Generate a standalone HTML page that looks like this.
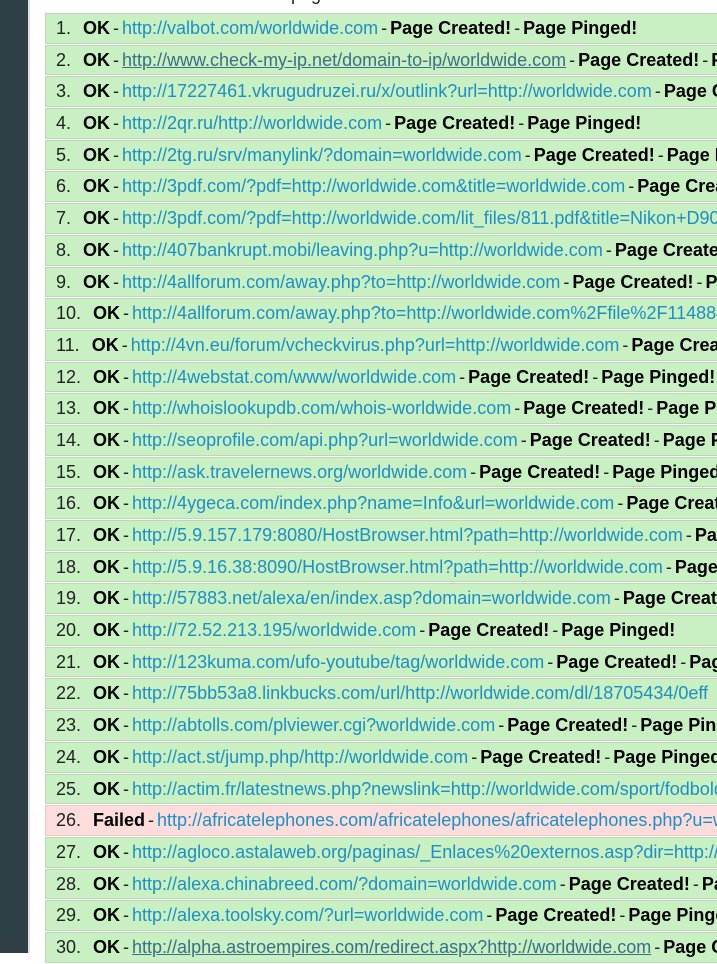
<!DOCTYPE html>
<html><head><meta charset="utf-8"><style>
html,body{margin:0;padding:0;width:717px;height:953px;overflow:hidden;background:#fff;font-family:"Liberation Sans",Arial,sans-serif;}
.side{position:absolute;left:0;top:0;width:28px;height:953px;background:#2f3f46;}
.strip{position:absolute;left:28px;top:0;width:2px;height:953px;background:#dde3e4;}
.list{position:absolute;left:45px;top:13px;width:672px;overflow:hidden;}
.r{height:28.7px;line-height:29px;border:1px solid #bcd8b4;border-right:none;background:#c8f0c2;margin-bottom:1px;white-space:nowrap;font-size:18px;color:#222;box-sizing:content-box;overflow:hidden;word-spacing:-2px;}
.r.f{background:#fddcdc;border-color:#e8c8c8;}
.n{display:inline-block;padding-left:10px;margin-right:12px;word-spacing:0;}
b{color:#000;word-spacing:0;}
a{color:#1e8fc2;text-decoration:none;}
a.u{color:#3a6f86;text-decoration:underline;}
.h{position:absolute;left:200px;top:-16px;font-size:18px;color:#222;white-space:nowrap;}
</style></head><body>
<div class="side"></div><div class="strip"></div>
<div class="h">Results for page:</div>
<div class="list">
<div class="r"><span class="n">1.</span><b>OK</b> - <a>http://valbot.com/worldwide.com</a> - <b>Page Created!</b> - <b>Page Pinged!</b></div>
<div class="r"><span class="n">2.</span><b>OK</b> - <a class="u">http://www.check-my-ip.net/domain-to-ip/worldwide.com</a> - <b>Page Created!</b> - <b>Page Pinged!</b></div>
<div class="r"><span class="n">3.</span><b>OK</b> - <a>http://17227461.vkrugudruzei.ru/x/outlink?url=http://worldwide.com</a> - <b>Page Created!</b></div>
<div class="r"><span class="n">4.</span><b>OK</b> - <a>http://2qr.ru/http://worldwide.com</a> - <b>Page Created!</b> - <b>Page Pinged!</b></div>
<div class="r"><span class="n">5.</span><b>OK</b> - <a>http://2tg.ru/srv/manylink/?domain=worldwide.com</a> - <b>Page Created!</b> - <b>Page Pinged!</b></div>
<div class="r"><span class="n">6.</span><b>OK</b> - <a>http://3pdf.com/?pdf=http://worldwide.com&amp;title=worldwide.com</a> - <b>Page Created!</b></div>
<div class="r"><span class="n">7.</span><b>OK</b> - <a>http://3pdf.com/?pdf=http://worldwide.com/lit_files/811.pdf&amp;title=Nikon+D90</a></div>
<div class="r"><span class="n">8.</span><b>OK</b> - <a>http://407bankrupt.mobi/leaving.php?u=http://worldwide.com</a> - <b>Page Created!</b></div>
<div class="r"><span class="n">9.</span><b>OK</b> - <a>http://4allforum.com/away.php?to=http://worldwide.com</a> - <b>Page Created!</b> - <b>Page Pinged!</b></div>
<div class="r"><span class="n">10.</span><b>OK</b> - <a>http://4allforum.com/away.php?to=http://worldwide.com%2Ffile%2F114884</a></div>
<div class="r"><span class="n">11.</span><b>OK</b> - <a>http://4vn.eu/forum/vcheckvirus.php?url=http://worldwide.com</a> - <b>Page Created!</b></div>
<div class="r"><span class="n">12.</span><b>OK</b> - <a>http://4webstat.com/www/worldwide.com</a> - <b>Page Created!</b> - <b>Page Pinged!</b></div>
<div class="r"><span class="n">13.</span><b>OK</b> - <a>http://whoislookupdb.com/whois-worldwide.com</a> - <b>Page Created!</b> - <b>Page Pinged!</b></div>
<div class="r"><span class="n">14.</span><b>OK</b> - <a>http://seoprofile.com/api.php?url=worldwide.com</a> - <b>Page Created!</b> - <b>Page Pinged!</b></div>
<div class="r"><span class="n">15.</span><b>OK</b> - <a>http://ask.travelernews.org/worldwide.com</a> - <b>Page Created!</b> - <b>Page Pinged!</b></div>
<div class="r"><span class="n">16.</span><b>OK</b> - <a>http://4ygeca.com/index.php?name=Info&amp;url=worldwide.com</a> - <b>Page Created!</b></div>
<div class="r"><span class="n">17.</span><b>OK</b> - <a>http://5.9.157.179:8080/HostBrowser.html?path=http://worldwide.com</a> - <b>Page Created!</b></div>
<div class="r"><span class="n">18.</span><b>OK</b> - <a>http://5.9.16.38:8090/HostBrowser.html?path=http://worldwide.com</a> - <b>Page Created!</b></div>
<div class="r"><span class="n">19.</span><b>OK</b> - <a>http://57883.net/alexa/en/index.asp?domain=worldwide.com</a> - <b>Page Created!</b></div>
<div class="r"><span class="n">20.</span><b>OK</b> - <a>http://72.52.213.195/worldwide.com</a> - <b>Page Created!</b> - <b>Page Pinged!</b></div>
<div class="r"><span class="n">21.</span><b>OK</b> - <a>http://123kuma.com/ufo-youtube/tag/worldwide.com</a> - <b>Page Created!</b> - <b>Page Pinged!</b></div>
<div class="r"><span class="n">22.</span><b>OK</b> - <a>http://75bb53a8.linkbucks.com/url/http://worldwide.com/dl/18705434/0eff</a></div>
<div class="r"><span class="n">23.</span><b>OK</b> - <a>http://abtolls.com/plviewer.cgi?worldwide.com</a> - <b>Page Created!</b> - <b>Page Pinged!</b></div>
<div class="r"><span class="n">24.</span><b>OK</b> - <a>http://act.st/jump.php/http://worldwide.com</a> - <b>Page Created!</b> - <b>Page Pinged!</b></div>
<div class="r"><span class="n">25.</span><b>OK</b> - <a>http://actim.fr/latestnews.php?newslink=http://worldwide.com/sport/fodbold</a></div>
<div class="r f"><span class="n">26.</span><b>Failed</b> - <a>http://africatelephones.com/africatelephones/africatelephones.php?u=worldwide</a></div>
<div class="r"><span class="n">27.</span><b>OK</b> - <a>http://agloco.astalaweb.org/paginas/_Enlaces%20externos.asp?dir=http://worldwide</a></div>
<div class="r"><span class="n">28.</span><b>OK</b> - <a>http://alexa.chinabreed.com/?domain=worldwide.com</a> - <b>Page Created!</b> - <b>Page Pinged!</b></div>
<div class="r"><span class="n">29.</span><b>OK</b> - <a>http://alexa.toolsky.com/?url=worldwide.com</a> - <b>Page Created!</b> - <b>Page Pinged!</b></div>
<div class="r"><span class="n">30.</span><b>OK</b> - <a class="u">http://alpha.astroempires.com/redirect.aspx?http://worldwide.com</a> - <b>Page Created!</b></div>
</div>
</body></html>
